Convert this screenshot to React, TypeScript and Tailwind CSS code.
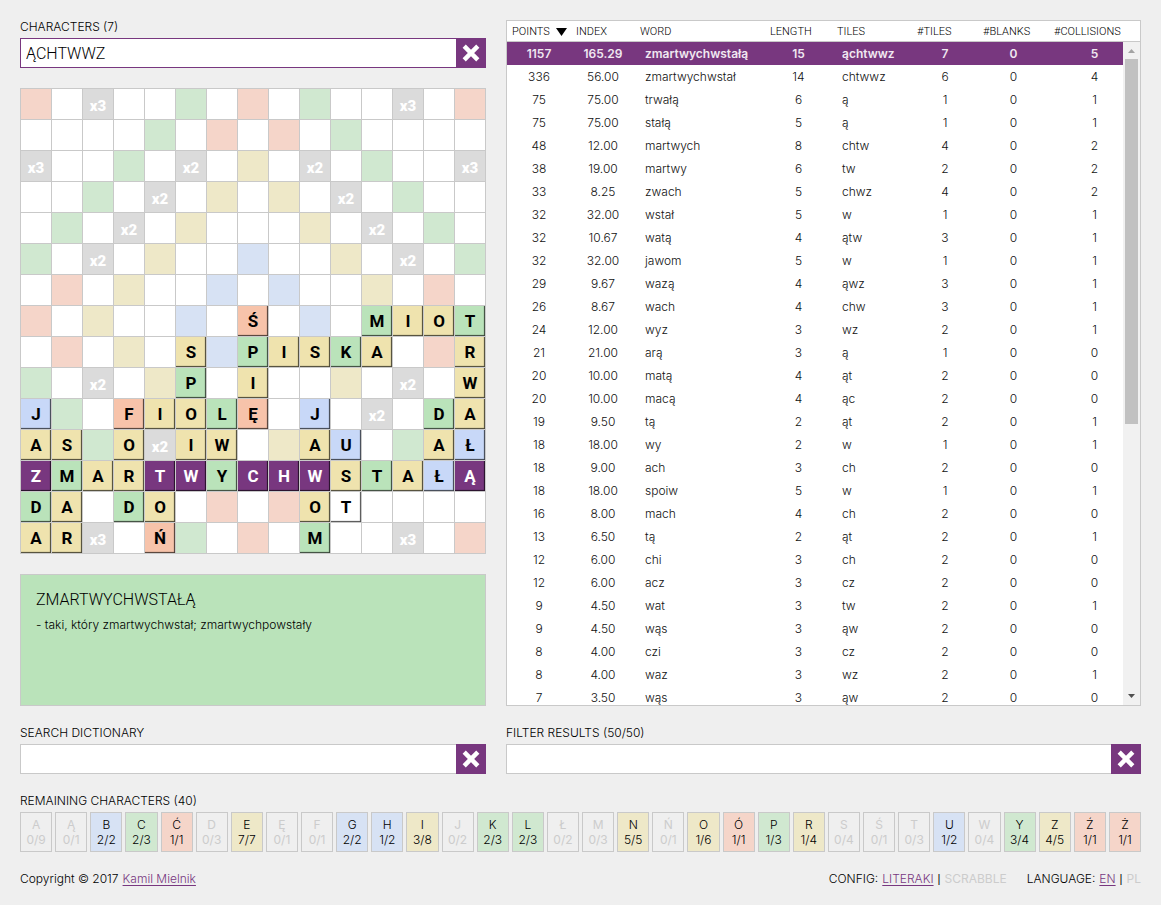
import { useState } from "react";

type Tone = "yellow" | "green" | "blue" | "red" | "white" | "purple";

const fieldColors: Record<string, string> = {
  r: "bg-[#f5d5c9]",
  g: "bg-[#d0e8d0]",
  y: "bg-[#eee8c8]",
  b: "bg-[#d7e2f4]",
  "2": "bg-[#dbdbdb]",
  "3": "bg-[#dbdbdb]",
  ".": "bg-white",
};

const tileColors: Record<Tone, string> = {
  yellow: "bg-[#efe3ae] text-black",
  green: "bg-[#bae3ba] text-black",
  blue: "bg-[#c8d8f8] text-black",
  red: "bg-[#f7c3aa] text-black",
  white: "bg-white text-black",
  purple: "bg-[#78377f] text-white",
};

const fields = [
  "r.3..g.r.g..3.r",
  "....g.r.r.g....",
  "3..g.2.y.2.g..3",
  "..g.2.y.y.2.g..",
  ".g.2.y...y.2.g.",
  "g.2.y..b..y.2.g",
  ".r.y..b.b..y.r.",
  "r.y..b...b..y.r",
  ".r.y..b.b..y.r.",
  "g.2.y..b..y.2.g",
  ".g.2.y...y.2.g.",
  "..g.2.y.y.2.g..",
  "3..g.2.y.2.g..3",
  "....g.r.r.g....",
  "r.3..g.r.g..3.r",
];

const letters = [
  "...............",
  "...............",
  "...............",
  "...............",
  "...............",
  "...............",
  "...............",
  ".......Ś...MIOT",
  ".....S.PISKA..R",
  ".....P.I......W",
  "J..FIOLĘ.J...DA",
  "AS.O.IW..AU..AŁ",
  "ZMARTWYCHWSTAŁĄ",
  "DA.DO....OT....",
  "AR..Ń....M.....",
];

const candidateColumns = [0, 4, 5, 7, 8, 9, 14];

const letterTones: Record<string, Tone> = {
  A: "yellow", E: "yellow", I: "yellow", N: "yellow", O: "yellow", R: "yellow", S: "yellow", W: "yellow", Z: "yellow",
  C: "green", D: "green", K: "green", L: "green", M: "green", P: "green", T: "green", Y: "green",
  B: "blue", G: "blue", H: "blue", J: "blue", Ł: "blue", U: "blue",
  Ą: "red", Ć: "red", Ę: "red", F: "red", Ń: "red", Ó: "red", Ś: "red", Ź: "red", Ż: "red",
};

function toneOf(row: number, column: number): Tone {
  if (row === 12 && candidateColumns.includes(column)) return "purple";
  if (row === 13 && column === 10) return "white";
  return letterTones[letters[row][column]];
}

const results: [number, string, string, number, string, number, number, number][] = [
  [1157, "165.29", "zmartwychwstałą", 15, "ąchtwwz", 7, 0, 5],
  [336, "56.00", "zmartwychwstał", 14, "chtwwz", 6, 0, 4],
  [75, "75.00", "trwałą", 6, "ą", 1, 0, 1],
  [75, "75.00", "stałą", 5, "ą", 1, 0, 1],
  [48, "12.00", "martwych", 8, "chtw", 4, 0, 2],
  [38, "19.00", "martwy", 6, "tw", 2, 0, 2],
  [33, "8.25", "zwach", 5, "chwz", 4, 0, 2],
  [32, "32.00", "wstał", 5, "w", 1, 0, 1],
  [32, "10.67", "watą", 4, "ątw", 3, 0, 1],
  [32, "32.00", "jawom", 5, "w", 1, 0, 1],
  [29, "9.67", "wazą", 4, "ąwz", 3, 0, 1],
  [26, "8.67", "wach", 4, "chw", 3, 0, 1],
  [24, "12.00", "wyz", 3, "wz", 2, 0, 1],
  [21, "21.00", "arą", 3, "ą", 1, 0, 0],
  [20, "10.00", "matą", 4, "ąt", 2, 0, 0],
  [20, "10.00", "macą", 4, "ąc", 2, 0, 0],
  [19, "9.50", "tą", 2, "ąt", 2, 0, 1],
  [18, "18.00", "wy", 2, "w", 1, 0, 1],
  [18, "9.00", "ach", 3, "ch", 2, 0, 0],
  [18, "18.00", "spoiw", 5, "w", 1, 0, 1],
  [16, "8.00", "mach", 4, "ch", 2, 0, 0],
  [13, "6.50", "tą", 2, "ąt", 2, 0, 1],
  [12, "6.00", "chi", 3, "ch", 2, 0, 0],
  [12, "6.00", "acz", 3, "cz", 2, 0, 0],
  [9, "4.50", "wat", 3, "tw", 2, 0, 1],
  [9, "4.50", "wąs", 3, "ąw", 2, 0, 0],
  [8, "4.00", "czi", 3, "cz", 2, 0, 0],
  [8, "4.00", "waz", 3, "wz", 2, 0, 1],
  [7, "3.50", "wąs", 3, "ąw", 2, 0, 0],
];

const remainingColors: Record<string, string> = {
  yellow: "bg-[#eee8c8]",
  green: "bg-[#d0e8d0]",
  blue: "bg-[#d7e2f4]",
  red: "bg-[#f5d5c9]",
};

const remaining = (
  "A0/9 Ą0/1 B2/2 C2/3 Ć1/1 D0/3 E7/7 Ę0/1 F0/1 G2/2 H1/2 I3/8 J0/2 K2/3 L2/3 Ł0/2 " +
  "M0/3 N5/5 Ń0/1 O1/6 Ó1/1 P1/3 R1/4 S0/4 Ś0/1 T0/3 U1/2 W0/4 Y3/4 Z4/5 Ź1/1 Ż1/1"
)
  .split(" ")
  .map((entry) => ({ letter: entry[0], count: entry.slice(1) }));

function Field({ id, label, initial = "", active = false }: { id: string; label: string; initial?: string; active?: boolean }) {
  const [value, setValue] = useState(initial);
  return (
    <div>
      <label htmlFor={id} className="mb-1 block leading-[14px]">
        {label}
      </label>
      <div className="flex h-[30px]">
        <input
          id={id}
          value={value}
          onChange={(event) => setValue(event.target.value)}
          className={`min-w-0 flex-1 border border-r-0 bg-white px-[5px] pt-0.5 font-[Roboto,sans-serif] text-base font-light outline-none ${
            active ? "border-[#78377f]" : "border-[#c9c9c9]"
          }`}
        />
        <button type="button" aria-label="Clear" onClick={() => setValue("")} className="w-[30px] bg-[#78377f]">
          <svg viewBox="0 0 30 30" className="size-[30px]" stroke="white" strokeWidth="4.5" aria-hidden="true">
            <path d="M8.2 8.2 21.8 21.8M21.8 8.2 8.2 21.8" />
          </svg>
        </button>
      </div>
    </div>
  );
}

function Board() {
  return (
    <div className="grid grid-cols-[repeat(15,30px)] gap-px border border-[#c9c9c9] bg-[#c9c9c9] font-[Roboto,sans-serif]">
      {fields.map((line, row) =>
        line.split("").map((field, column) => {
          const letter = letters[row][column];
          const key = `${row}-${column}`;
          if (letter !== ".") {
            return (
              <div
                key={key}
                className={`flex h-[30px] items-center justify-center text-[17px] font-bold shadow-[inset_-1px_-1px_1px_rgba(0,0,0,0.7)] ${tileColors[toneOf(row, column)]}`}
              >
                {letter}
              </div>
            );
          }
          return (
            <div
              key={key}
              className={`flex h-[30px] items-center justify-center pt-1 text-[15px] leading-none font-black text-white ${fieldColors[field]}`}
            >
              {field === "2" || field === "3" ? `x${field}` : ""}
            </div>
          );
        }),
      )}
    </div>
  );
}

function Results() {
  return (
    <div className="relative h-0 min-h-full overflow-hidden border border-[#c9c9c9] bg-white">
      <table className="w-full table-fixed border-separate border-spacing-0 text-center">
        <colgroup>
          <col className="w-16" />
          <col className="w-16" />
          <col />
          <col className="w-[67px]" />
          <col className="w-20" />
          <col className="w-[66px]" />
          <col className="w-[71px]" />
          <col className="w-[91px]" />
        </colgroup>
        <thead>
          <tr className="h-[21px] text-left text-[11px] leading-4 whitespace-nowrap [&>th]:border-b [&>th]:border-[#c9c9c9] [&>th]:px-[5px] [&>th]:pt-px [&>th]:pb-0 [&>th]:font-[Roboto,sans-serif] [&>th]:font-light">
            <th aria-sort="descending">
              <span className="flex items-center gap-1.5">
                POINTS
                <svg viewBox="0 0 11 8" className="h-2 w-[11px] shrink-0" aria-hidden="true">
                  <path d="M0 0h11L5.5 8z" />
                </svg>
              </span>
            </th>
            <th>INDEX</th>
            <th>WORD</th>
            <th>LENGTH</th>
            <th>TILES</th>
            <th>#TILES</th>
            <th>#BLANKS</th>
            <th>#COLLISIONS</th>
          </tr>
        </thead>
        <tbody>
          {results.map(([points, index, word, length, tiles, tileCount, blanks, collisions], row) => (
            <tr
              key={row}
              className={`h-[23px] [&>td]:p-0 [&>td]:pt-px ${row === 0 ? "bg-[#78377f] font-semibold text-[#f0e8f1]" : "text-[#111111]"}`}
            >
              <td>{points}</td>
              <td>{index}</td>
              <td className="text-left">
                <span className="pl-2.5">{word}</span>
              </td>
              <td>{length}</td>
              <td className="text-left">
                <span className="pl-2.5">{tiles}</span>
              </td>
              <td>{tileCount}</td>
              <td>{blanks}</td>
              <td>{collisions}</td>
            </tr>
          ))}
        </tbody>
      </table>
      <div aria-hidden="true" className="absolute top-[21px] right-0 bottom-0 flex w-[17px] flex-col items-center bg-[#f1f1f1]">
        <svg viewBox="0 0 17 17" className="size-[17px] shrink-0" fill="#a3a3a3">
          <path d="M5 11h7L8.5 7z" />
        </svg>
        <div className="flex w-full flex-1 flex-col items-center">
          <div className="h-[58%] w-[13px] bg-[#c1c1c1]" />
        </div>
        <svg viewBox="0 0 17 17" className="size-[17px] shrink-0" fill="#505050">
          <path d="M5 6h7L8.5 10z" />
        </svg>
      </div>
    </div>
  );
}

const linkClass = "text-[#78377f] underline underline-offset-2";

export default function App() {
  return (
    <div className="flex min-h-screen flex-col gap-5 bg-[#efefef] p-5 font-[Inter,sans-serif] text-xs font-light text-black">
      <div className="grid grid-cols-[466px_minmax(0,1fr)] gap-5">
        <div className="flex flex-col gap-5">
          <Field id="characters" label="CHARACTERS (7)" initial="ĄCHTWWZ" active />
          <Board />
          <section className="min-h-[132px] border border-[#c9c9c9] bg-[#bae3ba] p-[15px]">
            <h2 className="font-[Roboto,sans-serif] text-base leading-5 font-light">ZMARTWYCHWSTAŁĄ</h2>
            <p className="mt-1.5 leading-[18px]">- taki, który zmartwychwstał; zmartwychpowstały</p>
          </section>
        </div>
        <Results />
        <Field id="dictionary" label="SEARCH DICTIONARY" />
        <Field id="filter" label="FILTER RESULTS (50/50)" />
      </div>

      <section>
        <h2 className="mb-1 leading-[14px]">REMAINING CHARACTERS (40)</h2>
        <ul className="flex gap-[3px]">
          {remaining.map(({ letter, count }) => (
            <li
              key={letter}
              className={`flex h-10 min-w-0 flex-1 flex-col items-center justify-center border border-[#c9c9c9] leading-[15px] ${
                count.startsWith("0") ? "font-normal text-[#cccccc]" : remainingColors[letterTones[letter]]
              }`}
            >
              <span>{letter}</span>
              <span>{count}</span>
            </li>
          ))}
        </ul>
      </section>

      <footer className="flex justify-between leading-[14px]">
        <div className="flex gap-1">
          <span>Copyright © 2017</span>
          <a href="#author" className={linkClass}>
            Kamil Mielnik
          </a>
        </div>
        <div className="flex gap-5">
          <div className="flex gap-1">
            <span>CONFIG:</span>
            <a href="#literaki" className={linkClass}>LITERAKI</a>
            <span className="font-[Roboto,sans-serif] font-normal">|</span>
            <span className="font-normal text-[#cccccc]">SCRABBLE</span>
          </div>
          <div className="flex gap-1">
            <span>LANGUAGE:</span>
            <a href="#en" className={linkClass}>EN</a>
            <span className="font-[Roboto,sans-serif] font-normal">|</span>
            <span className="font-normal text-[#cccccc]">PL</span>
          </div>
        </div>
      </footer>
    </div>
  );
}
